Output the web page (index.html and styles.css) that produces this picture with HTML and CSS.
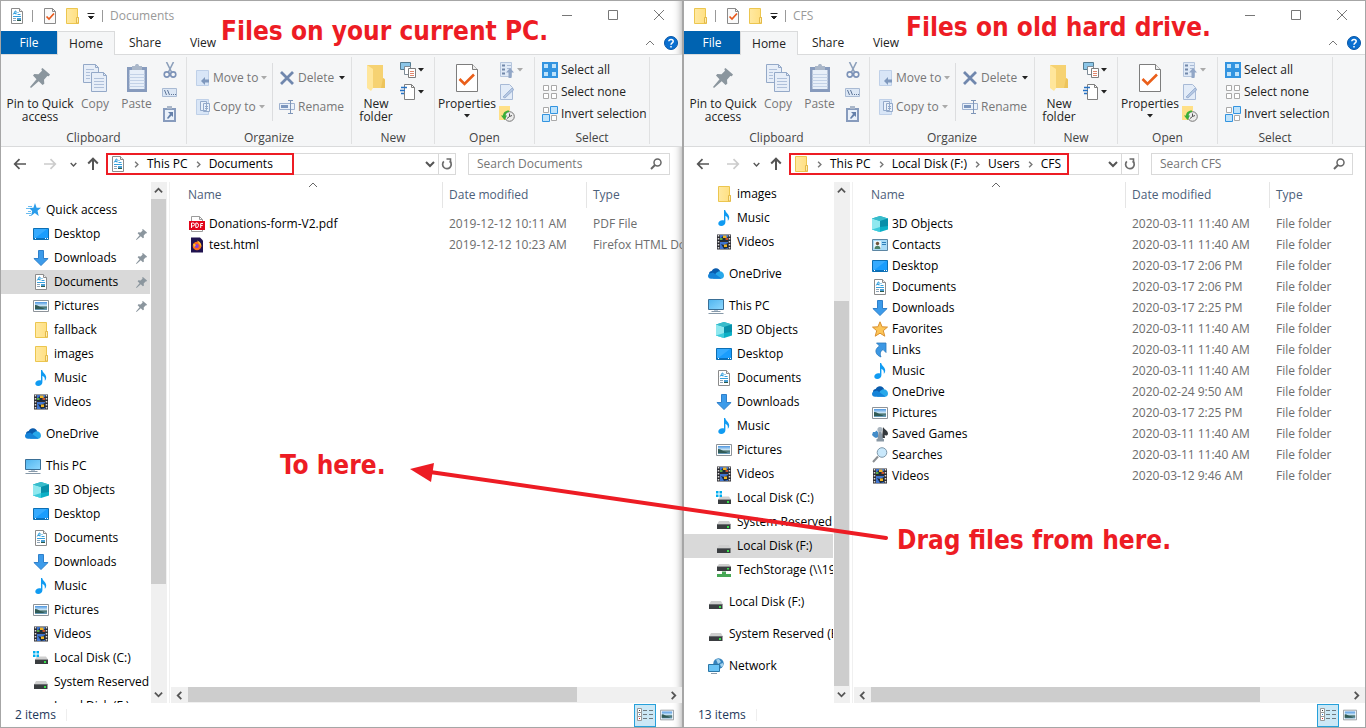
FILE: index.html
```html
<!DOCTYPE html>
<html lang="en">
<head>
<meta charset="utf-8">
<title>Documents and CFS</title>
<link rel="stylesheet" href="styles.css">
</head>
<body>
<svg class="sprite" aria-hidden="true">
  <defs>
    <linearGradient id="gFolder" x1="0" x2="1"><stop offset="0" stop-color="#ffe9a2"/><stop offset="1" stop-color="#ffdf80"/></linearGradient>
    <linearGradient id="gPc" x1="0" y1="0" x2="1" y2="1"><stop offset="0" stop-color="#4fb4ee"/><stop offset="1" stop-color="#8fd8ff"/></linearGradient>
    <linearGradient id="gSky" x1="0" y1="0" x2="0" y2="1"><stop offset="0" stop-color="#4c95e0"/><stop offset=".5" stop-color="#d5ecf8"/><stop offset=".6" stop-color="#47706a"/><stop offset="1" stop-color="#6ba1c4"/></linearGradient>
  </defs>
  <symbol id="folder" viewBox="0 0 16 16"><path d="M2.500.5h11v9h1v6h-12z" fill="url(#gFolder)" stroke="#ecc64f"/><path d="M12.500 15v-5.500h2v5.500z" fill="#ffeeb0" stroke="#e3b94a"/></symbol>
  <symbol id="doc" viewBox="0 0 16 16"><path d="M2.500.5h8l3 3v12h-11z" fill="#fff" stroke="#8b8b8b"/><path d="M10.500.5v3h3" fill="#eee" stroke="#8b8b8b"/><path d="M4.200 6.500l2-3.500h.8v3.500M5 5.500h2M8.500 4.500h1M8.500 6.500h3" stroke="#35a0dd" fill="none"/><path d="M4 8.500h8" stroke="#35a0dd"/><path d="M4 10.500h3M4 12.500h3" stroke="#8ea3b5"/><path d="M8 10h4v3H8z" fill="#4a9fd4"/><path d="M8 12h4v1H8z" fill="#2b5a4b"/></symbol>
  <symbol id="check" viewBox="0 0 16 16"><path d="M2.500.5h8l3 3v12h-11z" fill="#fafafa" stroke="#8a8a8a"/><path d="M10.500.5v3h3" fill="none" stroke="#8a8a8a"/><path d="M4.500 8.500l2.500 2.500 5-5.500" fill="none" stroke="#e8591c" stroke-width="1.700"/></symbol>
  <symbol id="desktop" viewBox="0 0 16 16"><path d="M.5 2.500h15v11H.5z" fill="#1a9dfd" stroke="#0c6fb4"/><path d="M1 13V3h13z" fill="#36abff"/><path d="M1 12.500h14" stroke="#0870bd"/><path d="M2 12.500h1M12 12.500h1M14 12.500h1" stroke="#fff"/></symbol>
  <symbol id="down" viewBox="0 0 16 16"><path d="M5.500.5h5v8h4.600L8 15.500.9 8.500h4.600z" fill="#3c9bea" stroke="#2f80cb"/></symbol>
  <symbol id="pictures" viewBox="0 0 16 16"><path d="M.5 2.500h15v11H.5z" fill="#fff" stroke="#8d9399"/><path d="M2 4h12v8H2z" fill="url(#gSky)"/><path d="M2 7c3 0 4 2 7 2.500L12 11H2z" fill="#315b56"/></symbol>
  <symbol id="music" viewBox="0 0 16 16"><path d="M8 0h1.200c.3 2.800 4 3.800 4 7.500 0 1.700-.7 2.500-1.400 3.200.5-3-1-4.200-2.400-4.900v6.400C9.400 14.600 7.400 16 5.200 16 3.300 16 2.300 15 2.300 13.600c0-2 2.200-3.500 4.400-3.300.5 0 .9.100 1.300.3z" fill="#109bf2"/></symbol>
  <symbol id="video" viewBox="0 0 16 16"><path d="M1 .5h14v15H1z" fill="#2d2d33"/><path d="M2.500 1v14M13.500 1v14" stroke="#ddd" stroke-width="1.500" stroke-dasharray="1.500 1.500"/><path d="M4 1h8v6H4zM4 8h8v7H4z" fill="#3f74cf"/><path d="M4 5l3-3 3 2 2-1v4H4zM5 10l3 1 4-2v5l-4 1z" fill="#1c2b3a"/><path d="M7 1.500h3.500V4H7zM8 10.500h3V13H8z" fill="#f0b323"/><path d="M4 4h2.500v2H4z" fill="#5aa845"/><path d="M9.500 4H12v2H9.500z" fill="#c5522b"/></symbol>
  <symbol id="cloud" viewBox="0 0 16 16"><path d="M1 8C1 6 2.400 5.200 3.700 5.100 4.700 3 6.300 2.200 8 2.300c2.200.1 3.700 1.400 4.300 3.200L9 9.500H2z" fill="#0a5cad"/><path d="M8 7l2.500-1.600c3-.6 5.500 1.500 5.500 4.100 0 1.700-1 3.200-3 3.200H5z" fill="#28a8ea"/><path d="M3 12.700C1.200 12.700 0 11.500 0 10S1.400 7 3.500 7.100l1.500-.5 8.500 5.900-.7.200z" fill="#1583d8"/></symbol>
  <symbol id="pc" viewBox="0 0 16 16"><path d="M.5 1.500h15v10H.5z" fill="url(#gPc)" stroke="#3a6f96"/><path d="M6 12h4v1.500H6z" fill="#b9c8d6"/><path d="M3.500 13.500h9M.500 15.500h15" stroke="#8799a9"/></symbol>
  <symbol id="cube" viewBox="0 0 16 16"><path d="M8 0l8 2.500v11L8 16l-8-2.500v-11z" fill="#0bb0c6"/><path d="M0 2.500L8 5v11l-8-2.500z" fill="#8fe8ef"/><path d="M8 0l8 2.500L8 5 0 2.500z" fill="#39bccb"/><path d="M8 5l8-2.500v7.500L8 11z" fill="#078fa9"/><path d="M0 13.500L8 11v5z" fill="#3ccbdc"/></symbol>
  <symbol id="star" viewBox="0 0 16 16"><path d="M10 1l1.600 4.700 4.400.1-3.500 3 1.200 5.200L9.800 11 6 14l1.200-5L4 6l4.400-.3z" fill="#2a9cea"/><path d="M3 4.500h4M1 6.500h4M3 9.500h3M1 11.500h5M4 13.500h2" stroke="#6bbcf0"/></symbol>
  <symbol id="fav" viewBox="0 0 16 16"><path d="M8 .8l2.100 5 5.400.3-4.200 3.600 1.500 5.500L8 12.200l-4.800 3 1.500-5.500L.5 6.100l5.400-.3z" fill="#fcc557" stroke="#d99031"/></symbol>
  <symbol id="links" viewBox="0 0 16 16"><path d="M4.500 1H14v9.500l-3-3c-2.700 1.500-3.400 4.500-2 7.500-4.600-1.500-8-7-1.500-11z" fill="#3c98e4" stroke="#2878bd" stroke-width=".8"/></symbol>
  <symbol id="contact" viewBox="0 0 16 16"><path d="M.5 2.500h15v11H.5z" fill="#a9dbf7" stroke="#5d86a3"/><path d="M2 4h7v8H2z" fill="#e8f4fa"/><circle cx="5.500" cy="6.500" r="1.700" fill="#6e543a"/><path d="M2.500 12c0-2 1.300-3.200 3-3.200s3 1.200 3 3.200z" fill="#4b8269"/><path d="M10 5.500h4M10 7.500h4" stroke="#2e7fb9"/></symbol>
  <symbol id="games" viewBox="0 0 16 16"><path d="M11 1c1 2 5 3.500 5 6.500 0 2-2 2.500-3.400 1.600L13 12h-3z" fill="#34383c"/><circle cx="8" cy="3.500" r="2.600" fill="#a9b5bf"/><path d="M6.500 6h3l1.500 7h1v2.500H4.500V13h1z" fill="#8897a4"/><path d="M1 6h2.200l1-1.500L6 6v5L4 12 2 11 0 9z" fill="#438cc8"/></symbol>
  <symbol id="search" viewBox="0 0 16 16"><path d="M1 15l5-5.500" stroke="#8b8f93" stroke-width="2"/><circle cx="10" cy="5.500" r="4.800" fill="#c9e8fb" stroke="#7f98aa"/></symbol>
  <symbol id="disk" viewBox="0 0 16 16"><path d="M3 7h10l2 3.500H1z" fill="#cfcfcf"/><path d="M1 10.500h13.500V15H1z" fill="#3a3d40"/><path d="M1 10.500h13.500" stroke="#6a6d70"/><path d="M11 12h2v2h-2z" fill="#37e04b"/></symbol>
  <symbol id="diskc" viewBox="0 0 16 16"><path d="M4 6.500h9l2 3H2z" fill="#cfcfcf"/><path d="M2 9.500h13V14H2z" fill="#3a3d40"/><path d="M11 11h2v2h-2z" fill="#37e04b"/><path d="M0 1h2.500v2.500H0zM3.500 1H6v2.500H3.500zM0 4.500h2.500V7H0zM3.500 4.500H6V7H3.500z" fill="#00adef"/></symbol>
  <symbol id="diskn" viewBox="0 0 16 16"><path d="M3 2h10l2 2.500H1z" fill="#cfcfcf"/><path d="M1 4.500h14V9H1z" fill="#3a3d40"/><path d="M11 6h2v1.500h-2z" fill="#37e04b"/><path d="M6 9.500h4V12h5v3H1v-3h5z" fill="#46a755"/></symbol>
  <symbol id="network" viewBox="0 0 16 16"><circle cx="10.500" cy="5.500" r="5.200" fill="#3583bd"/><path d="M8 1.500l3-.5 2 3-3 2zM12 6l3-1v3l-2 1z" fill="#a4d3ee"/><path d="M.5 6.500h11v7H.5z" fill="#6ac3f5" stroke="#2b76a6"/><path d="M3 15.500h6" stroke="#8b9cab"/></symbol>
  <symbol id="pdf" viewBox="0 0 16 16"><path d="M2.500.5h8l3 3v12h-11z" fill="#fff" stroke="#9b9b9b"/><path d="M10.500.5v3h3" fill="none" stroke="#9b9b9b"/><path d="M0 5h16v9H0z" fill="#e2061c"/><path d="M2.500 12v-5H4a1.200 1.200 0 010 3H2.500M6.800 7v4.500H8c2 0 2-4.500 0-4.500zM11.700 12V7.500H14M11.700 9.500h2" fill="none" stroke="#fff"/></symbol>
  <symbol id="firefox" viewBox="0 0 16 16"><path d="M2 .5h9l3 3v12H2z" fill="#20134f"/><circle cx="8" cy="9" r="4.300" fill="#ff6a1c"/><path d="M8 3.500c3 1 5 3.500 4.200 6.500C11 7 9 6.500 8 3.500z" fill="#ffbd2e"/><circle cx="7.800" cy="9" r="2" fill="#8c3fd6"/><path d="M4 7c1-.4 2 0 3 1.200L5 10z" fill="#ffc52c"/></symbol>
  <symbol id="pin" viewBox="0 0 20 20"><path d="M12.500 0L20 6.500l-1.200 1.800-1.500-.3-3.300 3.800.3 4L12.500 17 8.700 13.200 1 20l-1-1 6.500-7.800L3 7.500l1.300-1.600 4.200.3L12 2.800 11.300 1z" fill="#8b969e"/></symbol>
  <symbol id="copy" viewBox="0 0 24 28"><g fill="#e7eef8" stroke="#94a9c8"><path d="M.5.5h12l3 3v15H.5z"/><path d="M8.500 8.500h12l3 3v16h-15z"/></g><path d="M12.500.5v3h3M20.500 8.500v3h3" fill="none" stroke="#94a9c8"/><path d="M3 5.500h8M3 8.500h4M3 11.500h4M3 14.500h4M11 14.500h10M11 17.500h10M11 20.500h10M11 23.500h10" stroke="#afc0da"/></symbol>
  <symbol id="paste" viewBox="0 0 20 28"><path d="M0 3h20v25H0z" fill="#879bbd"/><path d="M2.500 6h15v19h-15z" fill="#e7eff9"/><path d="M2.500 10.500h15M2.500 13.500h15M2.500 16.500h15M2.500 19.500h15M2.500 22.500h15" stroke="#c3d2e7"/><path d="M5 2h3c0-2.600 4-2.600 4 0h3v4H5z" fill="#aab7c9"/></symbol>
  <symbol id="cut" viewBox="0 0 16 16"><path d="M4.500 0l5 10M11.500 0l-5 10" stroke="#8da0bb" stroke-width="1.600"/><circle cx="4.800" cy="12.500" r="2.600" fill="none" stroke="#7d93b8" stroke-width="1.600"/><circle cx="11.200" cy="12.500" r="2.600" fill="none" stroke="#7d93b8" stroke-width="1.600"/></symbol>
  <symbol id="path" viewBox="0 0 16 16"><path d="M.5 4.500h14v8H.5z" fill="#dce7f5" stroke="#a9bad3"/><path d="M2.500 6l2 5M5.500 6l2 5M9 10.500h1M11 10.500h1M13 10.500h1" stroke="#5e7598"/></symbol>
  <symbol id="short" viewBox="0 0 16 16"><path d="M1 2h13v14H1z" fill="#879bbd"/><path d="M3 4h9v10H3z" fill="#eaf1fa"/><path d="M5 0h5v3H5z" fill="#aab7c9"/><path d="M6 6h5v5L9.500 9.500 6 13 5 12l3-4z" fill="#6580aa"/></symbol>
  <symbol id="move" viewBox="0 0 16 16"><path d="M.5.5h12v15H.5z" fill="#d9e6f7" stroke="#bfd0e8"/><path d="M5 11l4-4v2.500h4v3H9V15z" fill="#7f98bd"/></symbol>
  <symbol id="copyto" viewBox="0 0 16 16"><path d="M.5.5h12v15H.5z" fill="#d9e6f7" stroke="#bfd0e8"/><path d="M4.500 2.500h6v9h-6zM7.500 4.500h6v8h-6z" fill="#eaf1fa" stroke="#93a9ca"/><path d="M9 7.500h3M9 9.500h3" stroke="#93a9ca"/></symbol>
  <symbol id="del" viewBox="0 0 16 16"><path d="M2 2l12 12M14 2L2 14" stroke="#7087ad" stroke-width="2.800"/></symbol>
  <symbol id="rename" viewBox="0 0 16 16"><path d="M.5 4.500h15v6H.5z" fill="#eaf1fa" stroke="#9eb1cf"/><path d="M2 6h7v3H2z" fill="#7c96be"/><path d="M9 1.500h5M9 14.500h5M11.500 1v14" stroke="#7e95b8"/></symbol>
  <symbol id="bigfolder" viewBox="0 0 20 28"><path d="M1 1h16v13l2 1v9H5z" fill="#f6d272"/><path d="M1 1l6 4v19l-2 3-4-3z" fill="#ffe69b"/><path d="M17 14l2 2v8h-4z" fill="#edc45c"/></symbol>
  <symbol id="newitem" viewBox="0 0 16 16"><path d="M.5.5h10v7H.5z" fill="#8cc6e8" stroke="#547c91"/><path d="M4.500 4.500h6v8h-6z" fill="#fff" stroke="#7d8b96"/><path d="M8.500 6.500h7v9h-7z" fill="#fff" stroke="#7d7d7d"/><path d="M10 9.500h4M10 11.500h4M10 13.500h4" stroke="#e0876d"/></symbol>
  <symbol id="easy" viewBox="0 0 16 16"><path d="M4.500.5h7l3 3v12h-10z" fill="#fff" stroke="#7f7f7f"/><path d="M11.500.5v3h3" fill="none" stroke="#7f7f7f"/><path d="M1 3.500h6M0 6.500h5M1 9.500h3" stroke="#2672c4" stroke-width="1.400"/></symbol>
  <symbol id="props" viewBox="0 0 22 28"><path d="M.5.5h16l5 5v22H.5z" fill="#fff" stroke="#7d7d7d"/><path d="M16.500.5v5h5" fill="#eee" stroke="#7d7d7d"/><path d="M3.500 15l5 5L18 10.500" fill="none" stroke="#ea5f1a" stroke-width="2.600"/></symbol>
  <symbol id="open" viewBox="0 0 16 16"><path d="M1.500.5h11v14h-11z" fill="#e0eaf7" stroke="#b6c6dd"/><path d="M3 3.500h3M3 7.500h3M3 11.500h3" stroke="#7288aa" stroke-width="2"/><path d="M8 3.500h4M8 6.500h4" stroke="#a9bad5"/><path d="M11 6l4 4.500h-2.500V16h-3v-5.500H7z" fill="#91a6c6"/></symbol>
  <symbol id="edit" viewBox="0 0 16 16"><path d="M1.500.5h9l3 3v12h-12z" fill="#e3ecf8" stroke="#a8bad6"/><path d="M4 13l9-9 2 1.500-9 8.500z" fill="#b4c7e2" stroke="#8da4c8" stroke-width=".7"/></symbol>
  <symbol id="history" viewBox="0 0 16 16"><path d="M0 0h11v14H0z" fill="#ffe087"/><circle cx="10.500" cy="10.500" r="4.800" fill="#ececec" stroke="#777"/><path d="M10.500 7.500v3l2.500-1M8 12.500l2.500-2" stroke="#555" fill="none"/><path d="M10 4.500C6 4.500 4 7 4 9.500H2L5.500 14 8 9.500H6.500C6.600 7.500 8 6 10 6z" fill="#3aae38"/></symbol>
  <symbol id="all" viewBox="0 0 16 16"><path d="M1 1h6v6H1zM9 1h6v6H9zM1 9h6v6H1zM9 9h6v6H9z" fill="#bfe3fb" stroke="#3394e0" stroke-width="2"/></symbol>
  <symbol id="none" viewBox="0 0 16 16"><path d="M1.500 1.500h5v5h-5zM9.500 1.500h5v5h-5zM1.500 9.500h5v5h-5zM9.500 9.500h5v5h-5z" fill="#fff" stroke="#a9a9a9"/></symbol>
  <symbol id="invert" viewBox="0 0 16 16"><path d="M1.500 1.500h5v5h-5zM9.500 9.500h5v5h-5z" fill="#fff" stroke="#a9a9a9"/><path d="M8.500.5h7v7h-7zM.5 8.500h7v7h-7z" fill="#bfe3fb" stroke="#3394e0"/></symbol>
  <symbol id="tri" viewBox="0 0 6 4"><path d="M0 0h6L3 3.500z" fill="currentColor"/></symbol>
  <symbol id="qat" viewBox="0 0 8 8"><path d="M.5 1.500h7M1.500 4.500h5L4 7z" fill="#222" stroke="#222" stroke-width="1"/></symbol>
  <symbol id="min" viewBox="0 0 12 12"><path d="M1 5.500h10" stroke="#777"/></symbol>
  <symbol id="max" viewBox="0 0 12 12"><path d="M1.500.5h9v9h-9z" fill="none" stroke="#777"/></symbol>
  <symbol id="close" viewBox="0 0 12 12"><path d="M1 0l10 10M11 0L1 10" stroke="#777"/></symbol>
  <symbol id="up" viewBox="0 0 10 10"><path d="M1 7l4-4 4 4" fill="none" stroke="currentColor" stroke-width="2"/></symbol>
  <symbol id="dn" viewBox="0 0 10 10"><path d="M1 3l4 4 4-4" fill="none" stroke="currentColor" stroke-width="2"/></symbol>
  <symbol id="lt" viewBox="0 0 10 10"><path d="M7 1L3 5l4 4" fill="none" stroke="currentColor" stroke-width="2"/></symbol>
  <symbol id="rt" viewBox="0 0 10 10"><path d="M3 1l4 4-4 4" fill="none" stroke="currentColor" stroke-width="2"/></symbol>
  <symbol id="thinup" viewBox="0 0 10 10"><path d="M1 7l4-4 4 4" fill="none" stroke="currentColor"/></symbol>
  <symbol id="help" viewBox="0 0 14 14"><circle cx="7" cy="7" r="6.500" fill="#0a6fd0" stroke="#0856a5"/><path d="M4.800 5.300c.2-2.500 4.400-2.400 4.400 0C9.200 7 7 6.800 7 8.800M7 10v1.600" fill="none" stroke="#fff" stroke-width="1.500"/></symbol>
  <symbol id="back" viewBox="0 0 14 12"><path d="M13 6H2M6.500 1.200L1.700 6l4.800 4.800" fill="none" stroke="currentColor" stroke-width="1.700"/></symbol>
  <symbol id="fwd" viewBox="0 0 14 12"><path d="M1 6h11M7.500 1.200L12.300 6l-4.800 4.800" fill="none" stroke="currentColor" stroke-width="1.700"/></symbol>
  <symbol id="upa" viewBox="0 0 12 14"><path d="M6 13V2M1.200 6.500L6 1.700l4.800 4.800" fill="none" stroke="currentColor" stroke-width="2"/></symbol>
  <symbol id="refresh" viewBox="0 0 12 12"><path d="M8.800 3.200A4.300 4.300 0 112.800 3.400" fill="none" stroke="#6c6c6c" stroke-width="1.700"/><path d="M5.500 1H9.500v4" fill="none" stroke="#6c6c6c" stroke-width="1.600"/></symbol>
  <symbol id="mag" viewBox="0 0 12 12"><path d="M1 11l4-4" stroke="#666" stroke-width="2"/><circle cx="7.500" cy="4.500" r="3.500" fill="none" stroke="#666" stroke-width="1.500"/></symbol>
  <symbol id="details" viewBox="0 0 16 14"><path d="M.5.500h4v4h-4zM.5 4.500h4v4h-4zM.5 8.500h4v4h-4z" fill="#fff" stroke="#999"/><path d="M2 2.500h1" stroke="#333"/><path d="M2 6.500h1" stroke="#2a7fd0"/><path d="M2 10.500h1" stroke="#d02a2a"/><path d="M6 2.500h4M12 2.500h4M6 6.500h4M12 6.500h4M6 10.500h4M12 10.500h4" stroke="#6d7a80"/></symbol>
</svg>

<main class="screen">
<section class="window window-left" aria-label="Documents">
  <header class="titlebar">
    <svg class="ic"><use href="#doc"/></svg><span class="tsep"></span>
    <button class="qa" aria-label="Properties"><svg class="ic"><use href="#check"/></svg></button>
    <button class="qa" aria-label="New folder"><svg class="ic"><use href="#folder"/></svg></button>
    <button class="qa-more" aria-label="Customize"><svg><use href="#qat"/></svg></button><span class="tsep"></span>
    <h1 class="title">Documents</h1>
    <div class="caption"><button aria-label="Minimize"><svg><use href="#min"/></svg></button><button aria-label="Maximize"><svg><use href="#max"/></svg></button><button aria-label="Close"><svg><use href="#close"/></svg></button></div>
  </header>
  <nav class="tabs"><button class="tab file">File</button><button class="tab active">Home</button><button class="tab">Share</button><button class="tab">View</button><span class="grow"></span><button class="fold" aria-label="Collapse ribbon"><svg><use href="#thinup"/></svg></button><button class="helpb" aria-label="Help"><svg><use href="#help"/></svg></button></nav>
  <div class="ribbon">
    <div class="group g-clip"><div class="gbody">
      <button class="big pinb"><svg class="bi"><use href="#pin"/></svg>Pin to Quick access</button>
      <button class="big copyb dim"><svg class="bi"><use href="#copy"/></svg>Copy</button>
      <button class="big pasteb dim"><svg class="bi"><use href="#paste"/></svg>Paste</button>
      <div class="stack"><button aria-label="Cut"><svg class="ic"><use href="#cut"/></svg></button><button aria-label="Copy path"><svg class="ic"><use href="#path"/></svg></button><button aria-label="Paste shortcut"><svg class="ic"><use href="#short"/></svg></button></div>
    </div><h2>Clipboard</h2></div>
    <div class="group g-org"><div class="gbody">
      <div class="pair first"><button><svg class="ic"><use href="#move"/></svg>Move to<svg class="tri"><use href="#tri"/></svg></button><button><svg class="ic"><use href="#copyto"/></svg>Copy to<svg class="tri"><use href="#tri"/></svg></button></div>
      <div class="pair"><button><svg class="ic"><use href="#del"/></svg>Delete<svg class="tri on"><use href="#tri"/></svg></button><button><svg class="ic"><use href="#rename"/></svg>Rename</button></div>
    </div><h2>Organize</h2></div>
    <div class="group g-new"><div class="gbody">
      <button class="big newb"><svg class="bi"><use href="#bigfolder"/></svg>New folder</button>
      <div class="stack"><button aria-label="New item"><svg class="ic"><use href="#newitem"/></svg><svg class="tri on"><use href="#tri"/></svg></button><button aria-label="Easy access"><svg class="ic"><use href="#easy"/></svg><svg class="tri on"><use href="#tri"/></svg></button></div>
    </div><h2>New</h2></div>
    <div class="group g-open"><div class="gbody">
      <button class="big propb"><svg class="bi"><use href="#props"/></svg>Properties<svg class="tri on"><use href="#tri"/></svg></button>
      <div class="stack"><button aria-label="Open"><svg class="ic"><use href="#open"/></svg><svg class="tri"><use href="#tri"/></svg></button><button aria-label="Edit"><svg class="ic"><use href="#edit"/></svg></button><button aria-label="History"><svg class="ic"><use href="#history"/></svg></button></div>
    </div><h2>Open</h2></div>
    <div class="group g-sel"><div class="gbody">
      <div class="stack"><button><svg class="ic"><use href="#all"/></svg>Select all</button><button><svg class="ic"><use href="#none"/></svg>Select none</button><button><svg class="ic"><use href="#invert"/></svg>Invert selection</button></div>
    </div><h2>Select</h2></div>
  </div>
  <div class="navrow">
    <button class="n28" aria-label="Back"><svg class="arr"><use href="#back"/></svg></button><button class="n32 off" aria-label="Forward"><svg class="arr"><use href="#fwd"/></svg></button><button class="n14" aria-label="Recent"><svg class="chs"><use href="#dn"/></svg></button><button class="n26" aria-label="Up"><svg class="upa"><use href="#upa"/></svg></button>
    <div class="address">
      <nav class="crumbs crumbs-short" aria-label="Path"><svg class="ic"><use href="#doc"/></svg><svg class="ch"><use href="#rt"/></svg><a href="#">This PC</a><svg class="ch"><use href="#rt"/></svg><a href="#">Documents</a></nav>
      <span class="grow"></span><button class="drop" aria-label="Previous locations"><svg><use href="#dn"/></svg></button><button class="refresh" aria-label="Refresh"><svg><use href="#refresh"/></svg></button>
    </div>
    <label class="searchbox"><input type="text" placeholder="Search Documents" aria-label="Search Documents"><svg><use href="#mag"/></svg></label>
  </div>
  <div class="content">
    <ul class="tree tree-top">
      <li class="root"><a href="#"><svg class="ic"><use href="#star"/></svg>Quick access</a></li>
      <li><a href="#"><svg class="ic"><use href="#desktop"/></svg>Desktop<svg class="pin"><use href="#pin"/></svg></a></li>
      <li><a href="#"><svg class="ic"><use href="#down"/></svg>Downloads<svg class="pin"><use href="#pin"/></svg></a></li>
      <li class="sel"><a href="#"><svg class="ic"><use href="#doc"/></svg>Documents<svg class="pin"><use href="#pin"/></svg></a></li>
      <li><a href="#"><svg class="ic"><use href="#pictures"/></svg>Pictures<svg class="pin"><use href="#pin"/></svg></a></li>
      <li><a href="#"><svg class="ic"><use href="#folder"/></svg>fallback</a></li>
      <li><a href="#"><svg class="ic"><use href="#folder"/></svg>images</a></li>
      <li><a href="#"><svg class="ic"><use href="#music"/></svg>Music</a></li>
      <li><a href="#"><svg class="ic"><use href="#video"/></svg>Videos</a></li>
      <li class="root gap"><a href="#"><svg class="ic"><use href="#cloud"/></svg>OneDrive</a></li>
      <li class="root gap"><a href="#"><svg class="ic"><use href="#pc"/></svg>This PC</a></li>
      <li><a href="#"><svg class="ic"><use href="#cube"/></svg>3D Objects</a></li>
      <li><a href="#"><svg class="ic"><use href="#desktop"/></svg>Desktop</a></li>
      <li><a href="#"><svg class="ic"><use href="#doc"/></svg>Documents</a></li>
      <li><a href="#"><svg class="ic"><use href="#down"/></svg>Downloads</a></li>
      <li><a href="#"><svg class="ic"><use href="#music"/></svg>Music</a></li>
      <li><a href="#"><svg class="ic"><use href="#pictures"/></svg>Pictures</a></li>
      <li><a href="#"><svg class="ic"><use href="#video"/></svg>Videos</a></li>
      <li><a href="#"><svg class="ic"><use href="#diskc"/></svg>Local Disk (C:)</a></li>
      <li><a href="#"><svg class="ic"><use href="#disk"/></svg>System Reserved (</a></li>
      <li><a href="#"><svg class="ic"><use href="#disk"/></svg>Local Disk (F:)</a></li>
    </ul>
    <div class="vbar"><button aria-label="Scroll up"><svg><use href="#up"/></svg></button><div class="vtrack"><div class="vthumb"></div></div><button aria-label="Scroll down"><svg><use href="#dn"/></svg></button></div>
    <div class="pane">
      <div class="files"><table>
        <thead><tr><th class="c-name">Name<svg class="sort"><use href="#thinup"/></svg></th><th class="c-date">Date modified</th><th>Type</th></tr></thead>
        <tbody>
          <tr><td><svg class="ic"><use href="#pdf"/></svg>Donations-form-V2.pdf</td><td>2019-12-12 10:11 AM</td><td>PDF File</td></tr>
          <tr><td><svg class="ic"><use href="#firefox"/></svg>test.html</td><td>2019-12-12 10:23 AM</td><td>Firefox HTML Do</td></tr>
        </tbody>
      </table></div>
      <div class="hbar"><button aria-label="Scroll left"><svg><use href="#lt"/></svg></button><div class="htrack"><div class="hthumb"></div></div><button aria-label="Scroll right"><svg><use href="#rt"/></svg></button></div>
    </div>
  </div>
  <footer class="status"><span class="count">2 items</span><span class="grow"></span><button class="vw on" aria-label="Details view"><svg class="dv"><use href="#details"/></svg></button><button class="vw" aria-label="Large icons"><svg class="ic14"><use href="#pictures"/></svg></button></footer>
</section>

<section class="window window-right" aria-label="CFS">
  <header class="titlebar">
    <svg class="ic"><use href="#folder"/></svg><span class="tsep"></span>
    <button class="qa" aria-label="Properties"><svg class="ic"><use href="#check"/></svg></button>
    <button class="qa" aria-label="New folder"><svg class="ic"><use href="#folder"/></svg></button>
    <button class="qa-more" aria-label="Customize"><svg><use href="#qat"/></svg></button><span class="tsep"></span>
    <h1 class="title">CFS</h1>
    <div class="caption"><button aria-label="Minimize"><svg><use href="#min"/></svg></button><button aria-label="Maximize"><svg><use href="#max"/></svg></button><button aria-label="Close"><svg><use href="#close"/></svg></button></div>
  </header>
  <nav class="tabs"><button class="tab file">File</button><button class="tab active">Home</button><button class="tab">Share</button><button class="tab">View</button><span class="grow"></span><button class="fold" aria-label="Collapse ribbon"><svg><use href="#thinup"/></svg></button><button class="helpb" aria-label="Help"><svg><use href="#help"/></svg></button></nav>
  <div class="ribbon">
    <div class="group g-clip"><div class="gbody">
      <button class="big pinb"><svg class="bi"><use href="#pin"/></svg>Pin to Quick access</button>
      <button class="big copyb dim"><svg class="bi"><use href="#copy"/></svg>Copy</button>
      <button class="big pasteb dim"><svg class="bi"><use href="#paste"/></svg>Paste</button>
      <div class="stack"><button aria-label="Cut"><svg class="ic"><use href="#cut"/></svg></button><button aria-label="Copy path"><svg class="ic"><use href="#path"/></svg></button><button aria-label="Paste shortcut"><svg class="ic"><use href="#short"/></svg></button></div>
    </div><h2>Clipboard</h2></div>
    <div class="group g-org"><div class="gbody">
      <div class="pair first"><button><svg class="ic"><use href="#move"/></svg>Move to<svg class="tri"><use href="#tri"/></svg></button><button><svg class="ic"><use href="#copyto"/></svg>Copy to<svg class="tri"><use href="#tri"/></svg></button></div>
      <div class="pair"><button><svg class="ic"><use href="#del"/></svg>Delete<svg class="tri on"><use href="#tri"/></svg></button><button><svg class="ic"><use href="#rename"/></svg>Rename</button></div>
    </div><h2>Organize</h2></div>
    <div class="group g-new"><div class="gbody">
      <button class="big newb"><svg class="bi"><use href="#bigfolder"/></svg>New folder</button>
      <div class="stack"><button aria-label="New item"><svg class="ic"><use href="#newitem"/></svg><svg class="tri on"><use href="#tri"/></svg></button><button aria-label="Easy access"><svg class="ic"><use href="#easy"/></svg><svg class="tri on"><use href="#tri"/></svg></button></div>
    </div><h2>New</h2></div>
    <div class="group g-open"><div class="gbody">
      <button class="big propb"><svg class="bi"><use href="#props"/></svg>Properties<svg class="tri on"><use href="#tri"/></svg></button>
      <div class="stack"><button aria-label="Open"><svg class="ic"><use href="#open"/></svg><svg class="tri"><use href="#tri"/></svg></button><button aria-label="Edit"><svg class="ic"><use href="#edit"/></svg></button><button aria-label="History"><svg class="ic"><use href="#history"/></svg></button></div>
    </div><h2>Open</h2></div>
    <div class="group g-sel"><div class="gbody">
      <div class="stack"><button><svg class="ic"><use href="#all"/></svg>Select all</button><button><svg class="ic"><use href="#none"/></svg>Select none</button><button><svg class="ic"><use href="#invert"/></svg>Invert selection</button></div>
    </div><h2>Select</h2></div>
  </div>
  <div class="navrow">
    <button class="n28" aria-label="Back"><svg class="arr"><use href="#back"/></svg></button><button class="n32 off" aria-label="Forward"><svg class="arr"><use href="#fwd"/></svg></button><button class="n14" aria-label="Recent"><svg class="chs"><use href="#dn"/></svg></button><button class="n26" aria-label="Up"><svg class="upa"><use href="#upa"/></svg></button>
    <div class="address">
      <nav class="crumbs crumbs-long" aria-label="Path"><svg class="ic"><use href="#folder"/></svg><svg class="ch"><use href="#rt"/></svg><a href="#">This PC</a><svg class="ch"><use href="#rt"/></svg><a href="#">Local Disk (F:)</a><svg class="ch"><use href="#rt"/></svg><a href="#">Users</a><svg class="ch"><use href="#rt"/></svg><a href="#">CFS</a></nav>
      <span class="grow"></span><button class="drop" aria-label="Previous locations"><svg><use href="#dn"/></svg></button><button class="refresh" aria-label="Refresh"><svg><use href="#refresh"/></svg></button>
    </div>
    <label class="searchbox"><input type="text" placeholder="Search CFS" aria-label="Search CFS"><svg><use href="#mag"/></svg></label>
  </div>
  <div class="content">
    <ul class="tree">
      <li><a href="#"><svg class="ic"><use href="#folder"/></svg>images</a></li>
      <li><a href="#"><svg class="ic"><use href="#music"/></svg>Music</a></li>
      <li><a href="#"><svg class="ic"><use href="#video"/></svg>Videos</a></li>
      <li class="root gap"><a href="#"><svg class="ic"><use href="#cloud"/></svg>OneDrive</a></li>
      <li class="root gap"><a href="#"><svg class="ic"><use href="#pc"/></svg>This PC</a></li>
      <li><a href="#"><svg class="ic"><use href="#cube"/></svg>3D Objects</a></li>
      <li><a href="#"><svg class="ic"><use href="#desktop"/></svg>Desktop</a></li>
      <li><a href="#"><svg class="ic"><use href="#doc"/></svg>Documents</a></li>
      <li><a href="#"><svg class="ic"><use href="#down"/></svg>Downloads</a></li>
      <li><a href="#"><svg class="ic"><use href="#music"/></svg>Music</a></li>
      <li><a href="#"><svg class="ic"><use href="#pictures"/></svg>Pictures</a></li>
      <li><a href="#"><svg class="ic"><use href="#video"/></svg>Videos</a></li>
      <li><a href="#"><svg class="ic"><use href="#diskc"/></svg>Local Disk (C:)</a></li>
      <li><a href="#"><svg class="ic"><use href="#disk"/></svg>System Reserved (</a></li>
      <li class="sel"><a href="#"><svg class="ic"><use href="#disk"/></svg>Local Disk (F:)</a></li>
      <li><a href="#"><svg class="ic"><use href="#diskn"/></svg>TechStorage (\\192</a></li>
      <li class="root gap"><a href="#"><svg class="ic"><use href="#disk"/></svg>Local Disk (F:)</a></li>
      <li class="root gap"><a href="#"><svg class="ic"><use href="#disk"/></svg>System Reserved (E:</a></li>
      <li class="root gap"><a href="#"><svg class="ic"><use href="#network"/></svg>Network</a></li>
    </ul>
    <div class="vbar vbar-end"><button aria-label="Scroll up"><svg><use href="#up"/></svg></button><div class="vtrack"><div class="vthumb"></div></div><button aria-label="Scroll down"><svg><use href="#dn"/></svg></button></div>
    <div class="pane">
      <div class="files"><table>
        <thead><tr><th class="c-name">Name<svg class="sort"><use href="#thinup"/></svg></th><th class="c-date">Date modified</th><th>Type</th></tr></thead>
        <tbody>
          <tr><td><svg class="ic"><use href="#cube"/></svg>3D Objects</td><td>2020-03-11 11:40 AM</td><td>File folder</td></tr>
          <tr><td><svg class="ic"><use href="#contact"/></svg>Contacts</td><td>2020-03-11 11:40 AM</td><td>File folder</td></tr>
          <tr><td><svg class="ic"><use href="#desktop"/></svg>Desktop</td><td>2020-03-17 2:06 PM</td><td>File folder</td></tr>
          <tr><td><svg class="ic"><use href="#doc"/></svg>Documents</td><td>2020-03-17 2:06 PM</td><td>File folder</td></tr>
          <tr><td><svg class="ic"><use href="#down"/></svg>Downloads</td><td>2020-03-17 2:25 PM</td><td>File folder</td></tr>
          <tr><td><svg class="ic"><use href="#fav"/></svg>Favorites</td><td>2020-03-11 11:40 AM</td><td>File folder</td></tr>
          <tr><td><svg class="ic"><use href="#links"/></svg>Links</td><td>2020-03-11 11:40 AM</td><td>File folder</td></tr>
          <tr><td><svg class="ic"><use href="#music"/></svg>Music</td><td>2020-03-11 11:40 AM</td><td>File folder</td></tr>
          <tr><td><svg class="ic"><use href="#cloud"/></svg>OneDrive</td><td>2020-02-24 9:50 AM</td><td>File folder</td></tr>
          <tr><td><svg class="ic"><use href="#pictures"/></svg>Pictures</td><td>2020-03-17 2:25 PM</td><td>File folder</td></tr>
          <tr><td><svg class="ic"><use href="#games"/></svg>Saved Games</td><td>2020-03-11 11:40 AM</td><td>File folder</td></tr>
          <tr><td><svg class="ic"><use href="#search"/></svg>Searches</td><td>2020-03-11 11:40 AM</td><td>File folder</td></tr>
          <tr><td><svg class="ic"><use href="#video"/></svg>Videos</td><td>2020-03-12 9:46 AM</td><td>File folder</td></tr>
        </tbody>
      </table></div>
      <div class="hbar"><button aria-label="Scroll left"><svg><use href="#lt"/></svg></button><div class="htrack"><div class="hthumb"></div></div><button aria-label="Scroll right"><svg><use href="#rt"/></svg></button></div>
    </div>
  </div>
  <footer class="status"><span class="count">13 items</span><span class="grow"></span><button class="vw on" aria-label="Details view"><svg class="dv"><use href="#details"/></svg></button><button class="vw" aria-label="Large icons"><svg class="ic14"><use href="#pictures"/></svg></button></footer>
</section>

<p class="note note-current">Files on your current PC.</p>
<p class="note note-old">Files on old hard drive.</p>
<p class="note note-to">To here.</p>
<p class="note note-from">Drag files from here.</p>
<svg class="arrow" viewBox="0 0 480 80" aria-hidden="true"><path d="M476 78L20 12" stroke="#ed1c24" stroke-width="4" stroke-linecap="round"/><path d="M0 9l24-6-3 19z" fill="#ed1c24"/></svg>
</main>
</body>
</html>
```

FILE: styles.css
```css
* { box-sizing: border-box; }
body {
  margin: 0;
  font: 12px/16px "Open Sans", "Noto Sans", sans-serif;
  color: #000;
  background: #fff;
}
button, input { font: inherit; color: inherit; }
button {
  display: flex;
  align-items: center;
  justify-content: center;
  padding: 0;
  border: 0;
  background: none;
  white-space: nowrap;
}
a { color: inherit; text-decoration: none; }
h1, h2, p, ul { margin: 0; padding: 0; font-weight: 400; font-size: 12px; }
ul { list-style: none; }
svg { flex: none; display: block; }
.sprite { position: absolute; width: 0; height: 0; }
.grow { flex: 1; }
.ic { width: 16px; height: 16px; }

.screen {
  position: relative;
  display: grid;
  grid-template-columns: 1fr 1fr;
  height: 100vh;
  overflow: hidden;
}
.window {
  display: flex;
  flex-direction: column;
  min-width: 0;
  min-height: 0;
  border: 1px solid #a6a6a6;
}
.window-left { box-shadow: inset -8px 0 8px -8px #999; }

/* title bar */
.titlebar { display: flex; align-items: center; height: 30px; padding-left: 8px; }
.tsep { width: 1px; height: 12px; margin: 0 7px; background: #999; }
.tsep + .qa { margin-left: 2px; }
.qa { width: 22px; justify-content: flex-start; }
.qa-more { width: 9px; }
.qa-more svg { width: 8px; height: 8px; }
.title { color: #999; }
.caption { display: flex; margin-left: auto; height: 30px; }
.caption button { width: 46px; }
.caption svg { width: 12px; height: 12px; }

/* tabs */
.tabs { display: flex; height: 24px; border-bottom: 1px solid #dadbdc; }
.tab { width: 56px; height: 24px; color: #222; }
.tab.active { width: 58px; background: #f5f6f7; border: 1px solid #dadbdc; border-bottom: 0; }
.tab.active, .tab.file { margin-bottom: -1px; }
.tab.active + .tab { width: 60px; }
.file { background: #0063b1; color: #fff; height: 23px; }
.fold { width: 20px; color: #777; }
.fold svg { width: 10px; height: 10px; }
.helpb { width: 22px; }
.helpb svg { width: 14px; height: 14px; }

/* ribbon */
.ribbon { display: flex; height: 92px; padding: 2px 0; background: #f5f6f7; border-bottom: 1px solid #dadbdc; color: #222; }
.group { display: flex; flex-direction: column; border-right: 1px solid #e0e1e2; }
.gbody { display: flex; flex: 1; align-items: flex-start; }
.group h2 { text-align: center; line-height: 13px; color: #444; }
.g-clip { width: 186px; }
.g-org { width: 165px; }
.g-new { width: 83px; }
.g-open { width: 100px; }
.g-sel { width: 115px; }
.big { flex-direction: column; justify-content: flex-start; padding-top: 7px; line-height: 13px; white-space: normal; }
.bi { width: 24px; height: 28px; margin-bottom: 5px; }
.dim { color: #777; }
.pinb { width: 78px; }
.pinb .bi { width: 20px; }
.copyb { width: 32px; }
.pasteb { width: 51px; }
.newb { width: 48px; padding-left: 4px; padding-right: 4px; }
.propb { width: 64px; }
.tri { width: 6px; height: 4px; color: #aaa; }
.tri.on { color: #222; }
.big .tri { margin-top: 4px; }
.stack { display: flex; flex-direction: column; padding-top: 2px; }
.stack button { height: 22px; gap: 2px; justify-content: flex-start; }
.g-sel .stack { padding-left: 7px; }
.g-sel .stack button { gap: 3px; }
.pair { margin-top: 6px; padding-left: 6px; height: 58px; }
.pair button { height: 29px; gap: 3px; color: #777; }
.pair.first { width: 86px; padding-left: 9px; border-right: 1px solid #dcdddf; }
.pair.first button { gap: 1px; }
.pair .tri { margin-left: 2px; }

/* navigation row */
.navrow { display: flex; align-items: center; height: 34px; padding: 0 12px 0 5px; color: #555; }
.n28 { width: 28px; }
.n32 { width: 32px; }
.n14 { width: 14px; }
.n26 { width: 26px; }
.off { color: #ccc; }
.arr { width: 14px; height: 12px; }
.upa { width: 12px; height: 14px; }
.chs { width: 7px; height: 7px; }
.address { display: flex; align-items: center; flex: 1; height: 22px; margin-right: 12px; border: 1px solid #d9d9d9; min-width: 0; }
.crumbs { display: flex; align-items: center; height: 22px; margin: -1px 0 -1px -1px; padding-left: 2px; border: 2px solid #ed1c24; color: #000; white-space: nowrap; }
.crumbs-short { width: 188px; }
.crumbs-long { width: 280px; }
.ch { width: 7px; height: 7px; margin: 0 7px; color: #777; }
.drop { width: 16px; }
.drop svg { width: 10px; height: 10px; }
.refresh { width: 17px; height: 20px; border-left: 1px solid #d9d9d9; }
.refresh svg { width: 12px; height: 12px; }
.searchbox { display: flex; align-items: center; width: 202px; height: 22px; padding: 0 7px 0 8px; border: 1px solid #d9d9d9; }
.searchbox input { flex: 1; min-width: 0; padding: 0; border: 0; outline: 0; background: none; }
.searchbox input::placeholder { color: #767676; opacity: 1; }
.searchbox svg { width: 12px; height: 12px; }

/* tree */
.content { display: flex; flex: 1; min-height: 0; padding-top: 1px; }
.tree { width: 149px; overflow: hidden; white-space: nowrap; }
.tree-top { padding-top: 16px; }
.tree a { display: flex; align-items: center; gap: 5px; height: 24px; padding-left: 32px; }
.tree .root a { padding-left: 24px; }
.tree .gap { margin-top: 8px; }
.tree .sel { background: #d9d9d9; }
.pin { width: 11px; height: 11px; margin: 0 3px 0 auto; }

/* scroll bars */
.vbar { display: flex; flex-direction: column; width: 17px; background: #f0f0f0; color: #555; border-left: 1px solid #fff; }
.vbar button { height: 17px; padding-right: 1px; }
.vbar svg, .hbar svg { width: 9px; height: 9px; }
.vtrack { flex: 1; display: flex; flex-direction: column; padding-right: 1px; }
.vthumb { height: 79%; background: #cdcdcd; }
.vbar-end .vtrack { justify-content: flex-end; }
.pane { display: flex; flex-direction: column; flex: 1; min-width: 0; margin-left: 2px; border-left: 1px solid #f0f0f0; }
.hbar { display: flex; height: 16px; margin-left: 1px; background: #f0f0f0; color: #555; }
.hbar button { width: 17px; }
.htrack { flex: 1; padding-bottom: 1px; }
.hthumb { width: 81.5%; height: 100%; background: #cdcdcd; }

/* file list */
.files { flex: 1; min-height: 0; overflow: hidden; padding-left: 13px; }
table { width: 100%; table-layout: fixed; border-collapse: separate; border-spacing: 0; }
th, td { padding: 0 0 0 6px; text-align: left; font-weight: 400; white-space: nowrap; overflow: hidden; }
th { position: relative; height: 26px; color: #4c607a; border-right: 1px solid #e5e5e5; }
th:first-child { padding-left: 5px; }
th:last-child { border-right: 0; }
td:last-child { overflow: visible; }
.c-name { width: 260px; }
.c-date { width: 144px; }
.sort { position: absolute; top: -2px; left: 50%; margin-left: -5px; width: 10px; height: 10px; color: #666; }
tbody::before { content: ""; display: block; height: 5px; }
td { height: 21px; color: #6d6d6d; }
td:first-child { color: #000; }
td .ic { display: inline-block; margin-right: 4px; vertical-align: -4px; }

/* status bar */
.status { display: flex; align-items: center; height: 24px; padding-right: 4px; color: #1e395b; }
.count { margin-left: 14px; padding-right: 10px; line-height: 12px; border-right: 1px solid #eee; }
.vw { width: 22px; height: 23px; }
.vw.on { border: 1px solid #26a0da; background: #cbe8f6; }
.dv { width: 16px; height: 14px; }
.ic14 { width: 14px; height: 14px; }

/* notes over the windows */
.note { position: absolute; font: 700 26px/32px "DejaVu Sans Condensed", "Open Sans", sans-serif; color: #ed1c24; white-space: nowrap; }
.note-current { left: 221px; top: 15px; }
.note-old { left: 906px; top: 11px; }
.note-to { left: 280px; top: 449px; }
.note-from { left: 897px; top: 524px; }
.arrow { position: absolute; left: 410px; top: 460px; width: 480px; height: 80px; overflow: visible; }
```
